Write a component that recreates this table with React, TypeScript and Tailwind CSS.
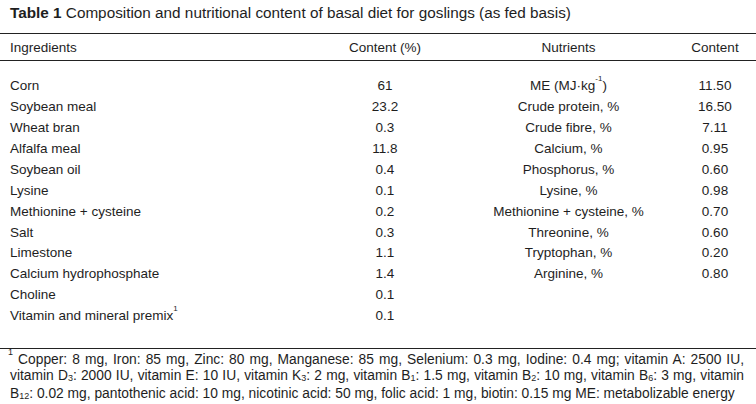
const ingredients: [string, string][] = [
  ['Corn', '61'],
  ['Soybean meal', '23.2'],
  ['Wheat bran', '0.3'],
  ['Alfalfa meal', '11.8'],
  ['Soybean oil', '0.4'],
  ['Lysine', '0.1'],
  ['Methionine + cysteine', '0.2'],
  ['Salt', '0.3'],
  ['Limestone', '1.1'],
  ['Calcium hydrophosphate', '1.4'],
  ['Choline', '0.1'],
  ['Vitamin and mineral premix', '0.1'],
];

const nutrients: [React.ReactNode, string][] = [
  [<>ME (MJ·kg<sup className="text-[8px] align-[5px]">-1</sup>)</>, '11.50'],
  ['Crude protein, %', '16.50'],
  ['Crude fibre, %', '7.11'],
  ['Calcium, %', '0.95'],
  ['Phosphorus, %', '0.60'],
  ['Lysine, %', '0.98'],
  ['Methionine + cysteine, %', '0.70'],
  ['Threonine, %', '0.60'],
  ['Tryptophan, %', '0.20'],
  ['Arginine, %', '0.80'],
];

function Sub({ children }: { children: React.ReactNode }) {
  return <span className="text-[9px] align-[-1px]">{children}</span>;
}

const cols = 'grid grid-cols-[328px_114px_21px_211px_82px]';

export default function App() {
  return (
    <div className="w-[756px] h-[404px] bg-white text-[#1e1e1e] font-['Liberation_Sans',Arial,sans-serif] overflow-hidden">
      <div className="h-[33px] px-[10px] pt-[4px] text-[15.3px] leading-[18px] whitespace-nowrap">
        <span className="font-bold">Table 1</span> Composition and nutritional content of basal diet for goslings (as fed basis)
      </div>

      <div className={`${cols} h-[28px] items-center pt-[2px] border-y-[1.5px] border-[#222] text-[13.5px]`}>
        <div className="pl-[10px]">Ingredients</div>
        <div className="text-center">Content (%)</div>
        <div />
        <div className="text-center">Nutrients</div>
        <div className="text-center">Content</div>
      </div>

      <div className="pt-[15px] h-[287px] text-[13.5px]">
        {ingredients.map(([name, val], i) => (
          <div key={name} className={`${cols} h-[20.9px] items-center`}>
            <div className="pl-[10px]">
              {name}
              {i === ingredients.length - 1 && <sup className="text-[8px] align-[5px]">1</sup>}
            </div>
            <div className="text-center">{val}</div>
            <div />
            <div className="text-center">{nutrients[i]?.[0]}</div>
            <div className="text-center">{nutrients[i]?.[1]}</div>
          </div>
        ))}
      </div>

      <div className="border-t-[1.5px] border-[#222] pl-[8px] pr-[12px] pt-[3px] text-[13.8px] leading-[15.5px]">
        <div className="text-justify [text-align-last:justify]">
          <sup className="text-[9px] align-[5px]">1</sup> Copper: 8 mg, Iron: 85 mg, Zinc: 80 mg, Manganese: 85 mg, Selenium: 0.3 mg, Iodine: 0.4 mg; vitamin A: 2500 IU,
        </div>
        <div className="pl-[2px] text-justify [text-align-last:justify]">
          vitamin D<Sub>3</Sub>: 2000 IU, vitamin E: 10 IU, vitamin K<Sub>3</Sub>: 2 mg, vitamin B<Sub>1</Sub>: 1.5 mg, vitamin B<Sub>2</Sub>: 10 mg, vitamin B<Sub>6</Sub>: 3 mg, vitamin
        </div>
        <div className="pl-[2px] whitespace-nowrap">
          B<Sub>12</Sub>: 0.02 mg, pantothenic acid: 10 mg, nicotinic acid: 50 mg, folic acid: 1 mg, biotin: 0.15 mg ME: metabolizable energy
        </div>
      </div>
    </div>
  );
}
